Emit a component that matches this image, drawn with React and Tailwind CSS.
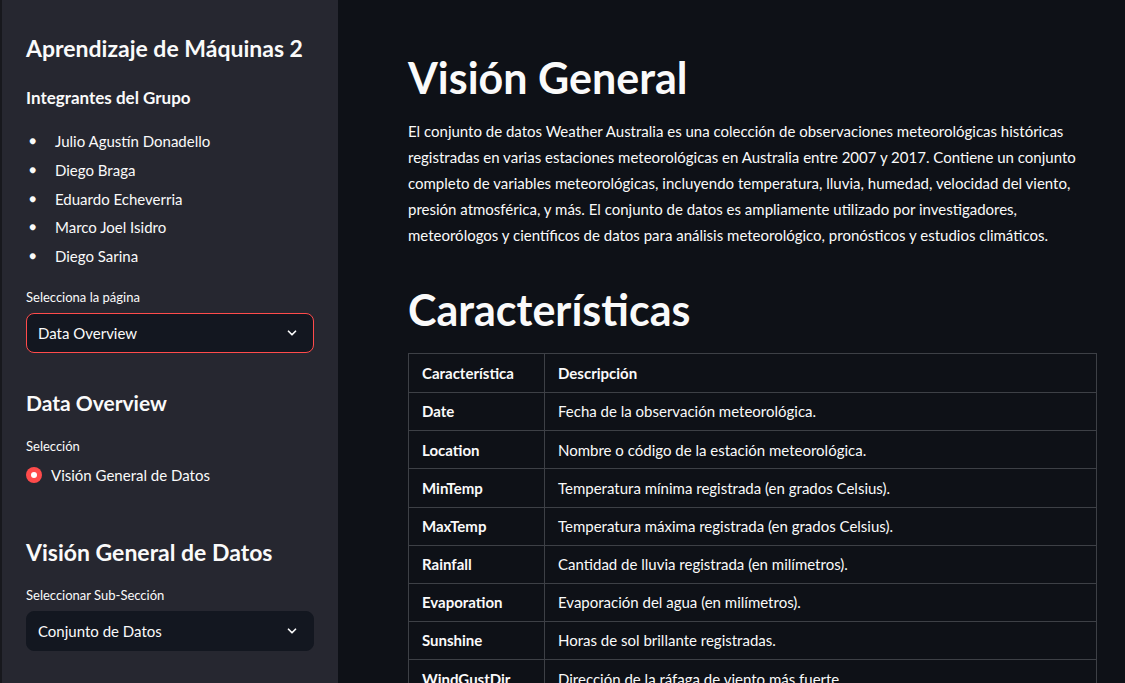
import React from "react";

const miembros = [
  "Julio Agustín Donadello",
  "Diego Braga",
  "Eduardo Echeverria",
  "Marco Joel Isidro",
  "Diego Sarina",
];

const filas = [
  ["Date", "Fecha de la observación meteorológica."],
  ["Location", "Nombre o código de la estación meteorológica."],
  ["MinTemp", "Temperatura mínima registrada (en grados Celsius)."],
  ["MaxTemp", "Temperatura máxima registrada (en grados Celsius)."],
  ["Rainfall", "Cantidad de lluvia registrada (en milímetros)."],
  ["Evaporation", "Evaporación del agua (en milímetros)."],
  ["Sunshine", "Horas de sol brillante registradas."],
  ["WindGustDir", "Dirección de la ráfaga de viento más fuerte."],
];

function Chevron() {
  return (
    <svg width="14" height="14" viewBox="0 0 24 24" fill="none" stroke="#fafafa" strokeWidth="3" strokeLinecap="round" strokeLinejoin="round">
      <path d="M6 9l6 6 6-6" />
    </svg>
  );
}

function Select({ value, active }) {
  return (
    <div
      className={[
        "h-10 rounded-lg bg-[#131720] flex items-center justify-between pl-[11px] pr-[14px] text-[15px]",
        active ? "border border-[#ff4b4b]" : "border border-[#131720]",
      ].join(" ")}
    >
      <span>{value}</span>
      <Chevron />
    </div>
  );
}

function Sidebar() {
  return (
    <aside className="w-[338px] shrink-0 bg-[#262730] border-l-2 border-[#17181d] px-[24px] pt-[32px] text-[#fafafa]">
      <h2 className="text-[23px] leading-8 font-bold">Aprendizaje de Máquinas 2</h2>

      <h3 className="mt-[22px] text-[17px] leading-6 font-bold">Integrantes del Grupo</h3>

      <ul className="mt-[17px] text-[15px]">
        {miembros.map((m) => (
          <li key={m} className="flex items-center leading-[28.8px]">
            <span className="w-[29px] pl-[3px] text-[12px]">●</span>
            <span>{m}</span>
          </li>
        ))}
      </ul>

      <p className="mt-[16px] text-[13px] leading-5">Selecciona la página</p>
      <div className="mt-[6px]">
        <Select value="Data Overview" active />
      </div>

      <h3 className="mt-[35px] text-[21px] leading-[30px] font-bold">Data Overview</h3>

      <p className="mt-[18px] text-[13px] leading-5">Selección</p>
      <div className="mt-[7px] flex items-center gap-[9px] text-[15px] leading-6">
        <span className="w-4 h-4 rounded-full bg-[#ff4b4b] flex items-center justify-center">
          <span className="w-[6px] h-[6px] rounded-full bg-white" />
        </span>
        <span>Visión General de Datos</span>
      </div>

      <h2 className="mt-[49px] text-[23px] leading-8 font-bold">Visión General de Datos</h2>

      <p className="mt-[17px] text-[13px] leading-5">Seleccionar Sub-Sección</p>
      <div className="mt-[6px]">
        <Select value="Conjunto de Datos" />
      </div>
    </aside>
  );
}

export default function App() {
  return (
    <div
      className="flex h-[683px] w-full overflow-hidden bg-[#0e1117] text-[#fafafa]"
      style={{ fontFamily: "Lato, 'Noto Sans', sans-serif" }}
    >
      <Sidebar />

      <main className="flex-1 pl-[70px] pr-[28px] pt-[50px]">
        <h1 className="text-[43px] leading-[56px] font-bold">Visión General</h1>

        <p className="mt-[12px] text-[15px] leading-[26px]">
          El conjunto de datos Weather Australia es una colección de observaciones meteorológicas históricas
          registradas en varias estaciones meteorológicas en Australia entre 2007 y 2017. Contiene un conjunto
          completo de variables meteorológicas, incluyendo temperatura, lluvia, humedad, velocidad del viento,
          presión atmosférica, y más. El conjunto de datos es ampliamente utilizado por investigadores,
          meteorólogos y científicos de datos para análisis meteorológico, pronósticos y estudios climáticos.
        </p>

        <h1 className="mt-[34px] text-[43px] leading-[56px] font-bold">Características</h1>

        <table className="mt-[15px] w-full border-collapse text-[15px]">
          <thead>
            <tr className="h-[39px]">
              <th className="w-[136px] border border-[#3d4046] px-[13px] text-left font-bold">Característica</th>
              <th className="border border-[#3d4046] px-[13px] text-left font-bold">Descripción</th>
            </tr>
          </thead>
          <tbody>
            {filas.map(([k, d]) => (
              <tr key={k} className="h-[38.2px]">
                <td className="border border-[#3d4046] px-[13px] font-bold">{k}</td>
                <td className="border border-[#3d4046] px-[13px]">{d}</td>
              </tr>
            ))}
          </tbody>
        </table>
      </main>
    </div>
  );
}
